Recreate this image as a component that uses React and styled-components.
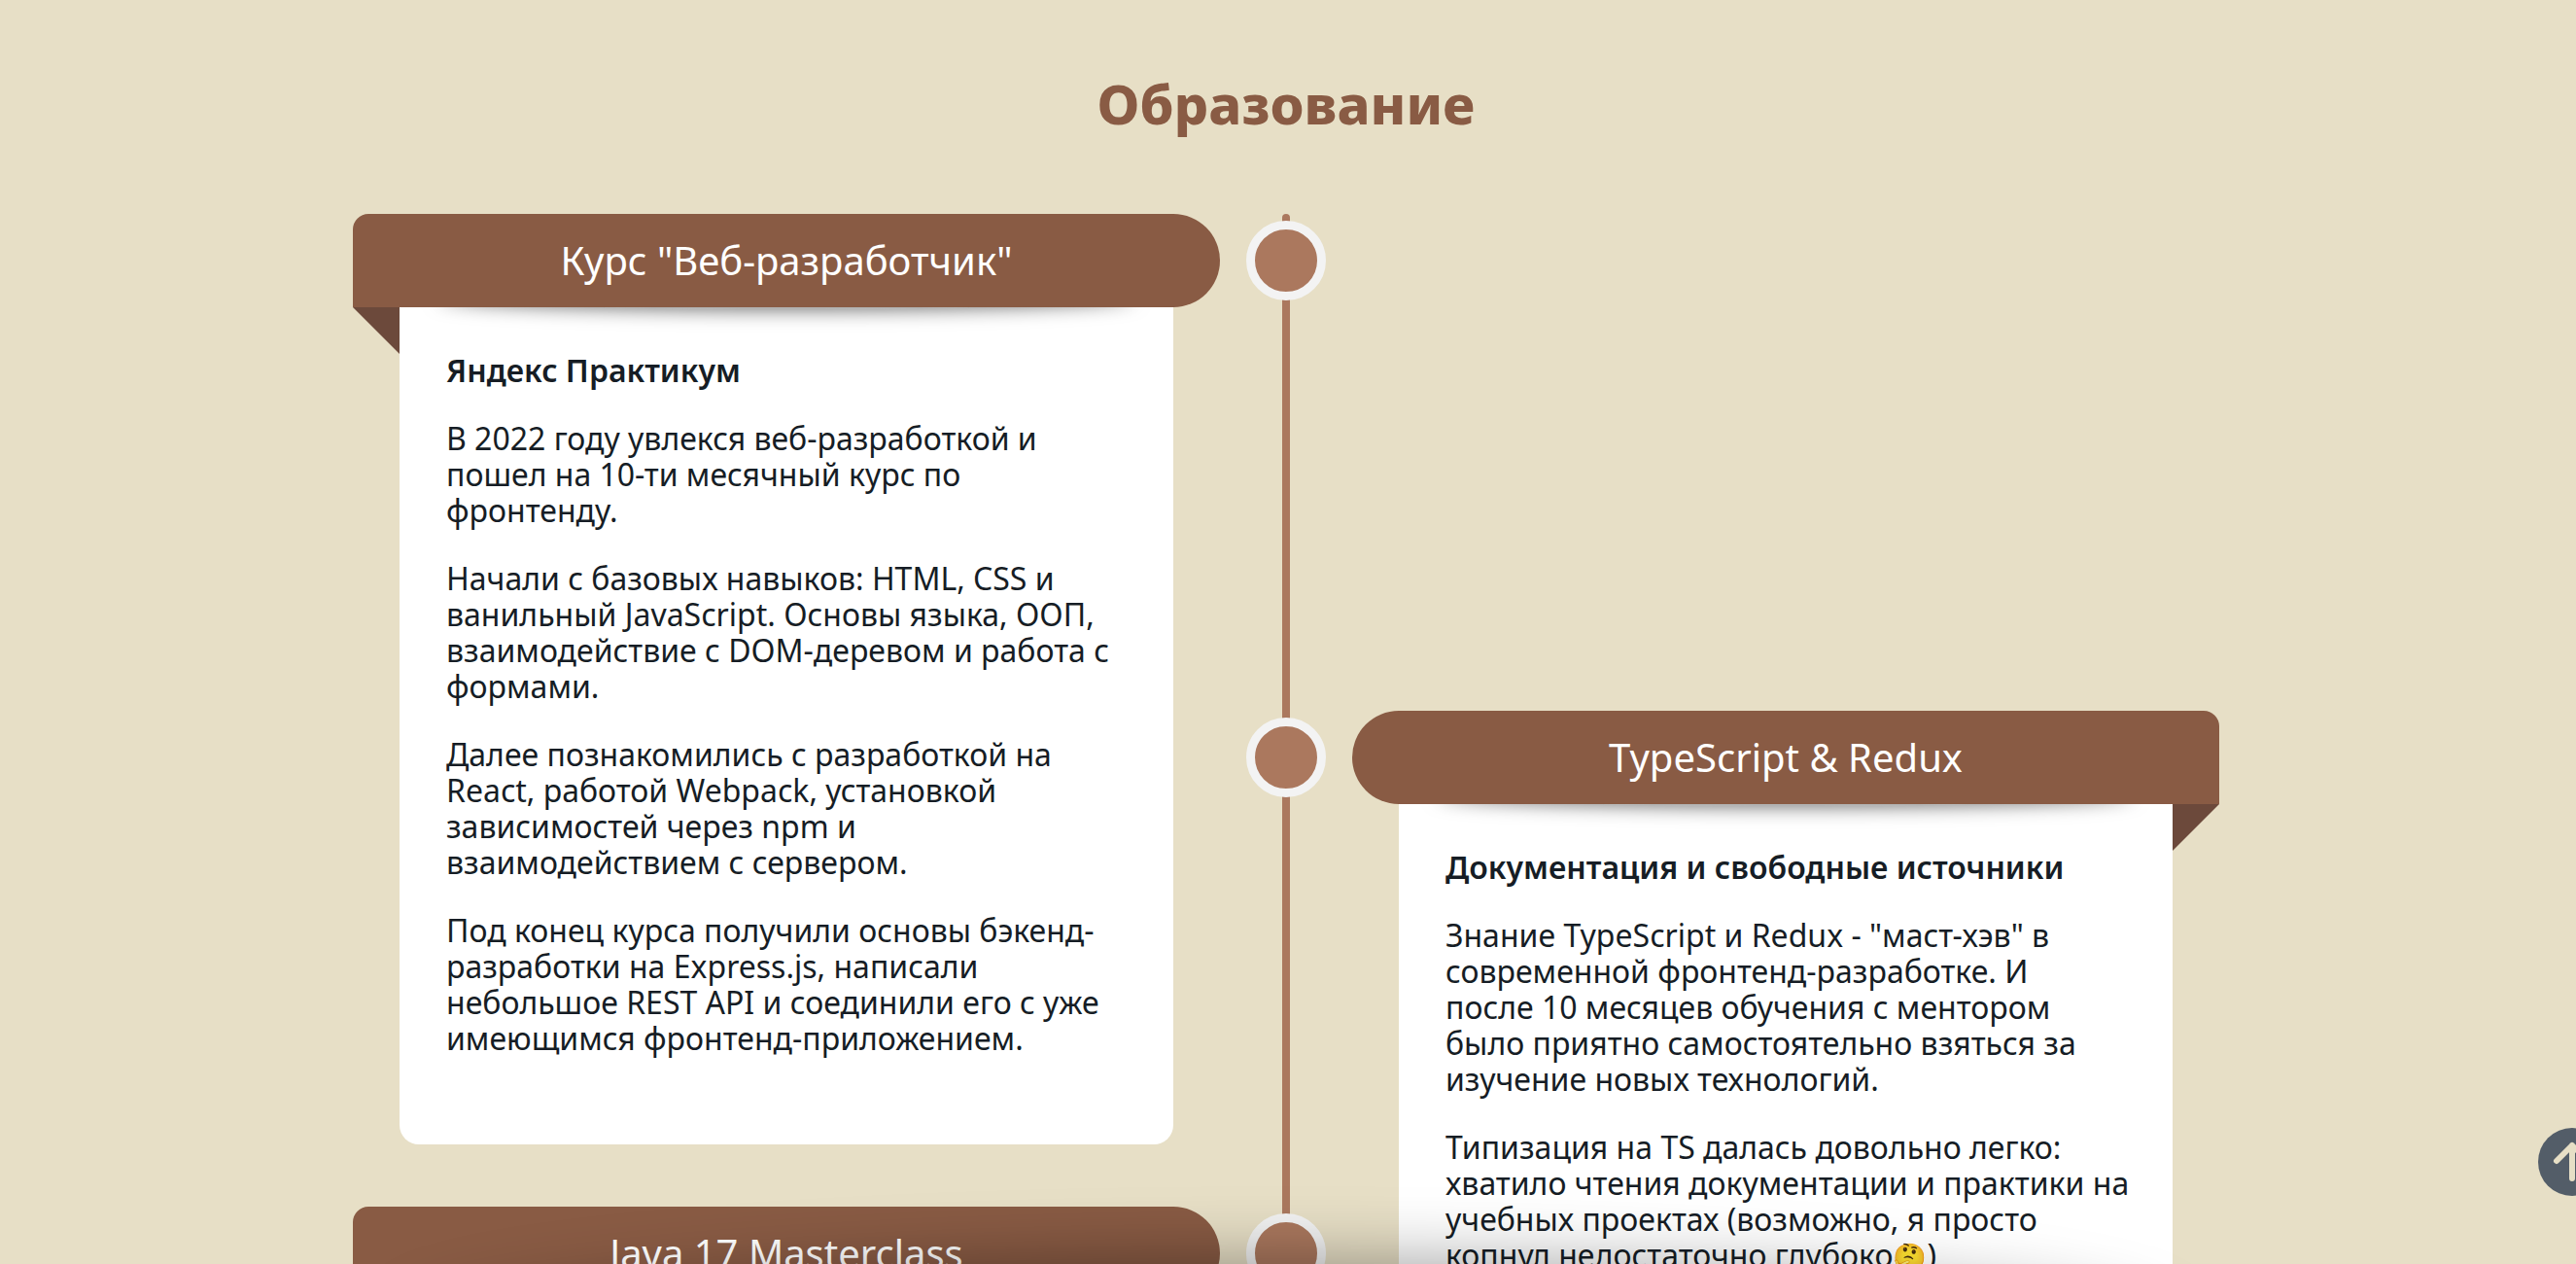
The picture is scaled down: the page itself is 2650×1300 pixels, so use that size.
import React from "react";
import styled, { createGlobalStyle, css } from "styled-components";

const colors = {
  page: "#e7dfc6",
  header: "#895b44",
  fold: "#6c493b",
  rail: "#ab785e",
  ring: "#f3f3f3",
  text: "#161d25",
  card: "#ffffff",
};

const GlobalStyle = createGlobalStyle`
  *, *::before, *::after { box-sizing: border-box; }
  body {
    margin: 0;
    background: ${colors.page};
    color: ${colors.text};
    font-family: "Noto Sans", "Open Sans", sans-serif;
  }
`;

const Page = styled.main`
  height: 100vh;
  overflow: hidden;
  padding: 68px 4px 0 0;
`;

const Title = styled.h2`
  margin: 0 0 76px;
  text-align: center;
  font-size: 56px;
  line-height: 76px;
  font-weight: 800;
  color: ${colors.header};
`;

const Timeline = styled.div`
  display: grid;
  grid-template-columns: minmax(0, 1fr) 8px minmax(0, 1fr);
  column-gap: 64px;
  max-width: 1920px;
  margin: 0 auto;
`;

const Column = styled.div`
  display: flex;
  flex-direction: column;
  gap: 64px;
  padding-top: ${(p) => (p.$lowered ? "511px" : "0")};
`;

const Rail = styled.div`
  border-radius: 4px;
  background: ${colors.rail};
`;

const Entry = styled.article`
  position: relative;
`;

const Marker = styled.span`
  position: absolute;
  z-index: 2;
  top: 7px;
  ${(p) => (p.$side === "left" ? "right" : "left")}: -109px;
  width: 82px;
  height: 82px;
  border: 9px solid ${colors.ring};
  border-radius: 50%;
  background: ${colors.rail};
`;

const EntryHeader = styled.h3`
  position: relative;
  z-index: 1;
  display: flex;
  align-items: center;
  justify-content: center;
  height: 96px;
  margin: 0;
  padding-bottom: 2px;
  border-radius: ${(p) => (p.$side === "left" ? "16px 48px 48px 0" : "48px 16px 0 48px")};
  background: ${colors.header};
  color: #fff;
  font-size: 40px;
  font-weight: 400;

  &::after {
    content: "";
    position: absolute;
    top: 100%;
    width: 48px;
    height: 48px;
    background: ${colors.fold};
    ${(p) =>
      p.$side === "left"
        ? css`
            left: 0;
            clip-path: polygon(0 0, 100% 0, 100% 100%);
          `
        : css`
            right: 0;
            clip-path: polygon(0 0, 100% 0, 0 100%);
          `}
  }
`;

const Card = styled.div`
  position: relative;
  display: flex;
  flex-direction: column;
  gap: 33px;
  margin: 0 48px;
  padding: 46px 48px 91px;
  border-radius: 0 0 20px 20px;
  background: ${colors.card};

  &::before {
    content: "";
    position: absolute;
    top: -24px;
    left: 40px;
    right: 40px;
    height: 26px;
    border-radius: 50%;
    background: rgba(0, 0, 0, 0.3);
    box-shadow: 0 0 20px rgba(0, 0, 0, 0.6);
  }
`;

const Place = styled.h4`
  margin: 0;
  font-size: 32px;
  line-height: 37px;
  font-weight: 600;
  white-space: nowrap;
`;

const Text = styled.p`
  margin: 0;
  font-size: 32px;
  line-height: 37px;
  white-space: pre;
`;

const Emoji = styled.span`
  font-size: 28px;
  line-height: 1;
`;

const BottomShade = styled.div`
  position: fixed;
  z-index: 3;
  bottom: -160px;
  left: 16%;
  right: 16%;
  height: 160px;
  border-radius: 50%;
  box-shadow: 0 0 72px rgba(0, 0, 0, 0.4);
  pointer-events: none;
`;

const UpButton = styled.button`
  position: fixed;
  z-index: 4;
  right: -31px;
  bottom: 70px;
  width: 70px;
  height: 70px;
  padding: 0;
  border: 0;
  border-radius: 50%;
  background: #535d68;
  color: ${colors.page};
  cursor: pointer;

  svg {
    display: block;
  }
`;

const left = [
  {
    title: 'Курс "Веб-разработчик"',
    place: "Яндекс Практикум",
    texts: [
      "В 2022 году увлекся веб-разработкой и\nпошел на 10-ти месячный курс по\nфронтенду.",
      "Начали с базовых навыков: HTML, CSS и\nванильный JavaScript. Основы языка, ООП,\nвзаимодействие с DOM-деревом и работа с\nформами.",
      "Далее познакомились с разработкой на\nReact, работой Webpack, установкой\nзависимостей через npm и\nвзаимодействием с сервером.",
      "Под конец курса получили основы бэкенд-\nразработки на Express.js, написали\nнебольшое REST API и соединили его с уже\nимеющимся фронтенд-приложением.",
    ],
  },
  { title: "Java 17 Masterclass", texts: [] },
];

const right = [
  {
    title: "TypeScript & Redux",
    place: "Документация и свободные источники",
    texts: [
      'Знание TypeScript и Redux - "маст-хэв" в\nсовременной фронтенд-разработке. И\nпосле 10 месяцев обучения с ментором\nбыло приятно самостоятельно взяться за\nизучение новых технологий.',
      <>
        {"Типизация на TS далась довольно легко:\nхватило чтения документации и практики на\nучебных проектах (возможно, я просто\nкопнул недостаточно глубоко"}
        <Emoji>🤔</Emoji>)
      </>,
    ],
  },
];

function TimelineEntry({ side, entry }) {
  return (
    <Entry>
      <EntryHeader $side={side}>{entry.title}</EntryHeader>
      <Marker $side={side} />
      <Card>
        {entry.place && <Place>{entry.place}</Place>}
        {entry.texts.map((text, i) => (
          <Text key={i}>{text}</Text>
        ))}
      </Card>
    </Entry>
  );
}

export default function App() {
  return (
    <>
      <GlobalStyle />
      <Page>
        <Title>Образование</Title>
        <Timeline>
          <Column>
            {left.map((entry) => (
              <TimelineEntry key={entry.title} side="left" entry={entry} />
            ))}
          </Column>
          <Rail />
          <Column $lowered>
            {right.map((entry) => (
              <TimelineEntry key={entry.title} side="right" entry={entry} />
            ))}
          </Column>
        </Timeline>
      </Page>
      <BottomShade />
      <UpButton type="button" aria-label="Наверх">
        <svg width="70" height="70" viewBox="0 0 70 70" fill="none" stroke="currentColor" strokeWidth="6" strokeLinecap="round" strokeLinejoin="round" aria-hidden="true">
          <path d="M35 52V18M19 34L35 18L51 34" />
        </svg>
      </UpButton>
    </>
  );
}
